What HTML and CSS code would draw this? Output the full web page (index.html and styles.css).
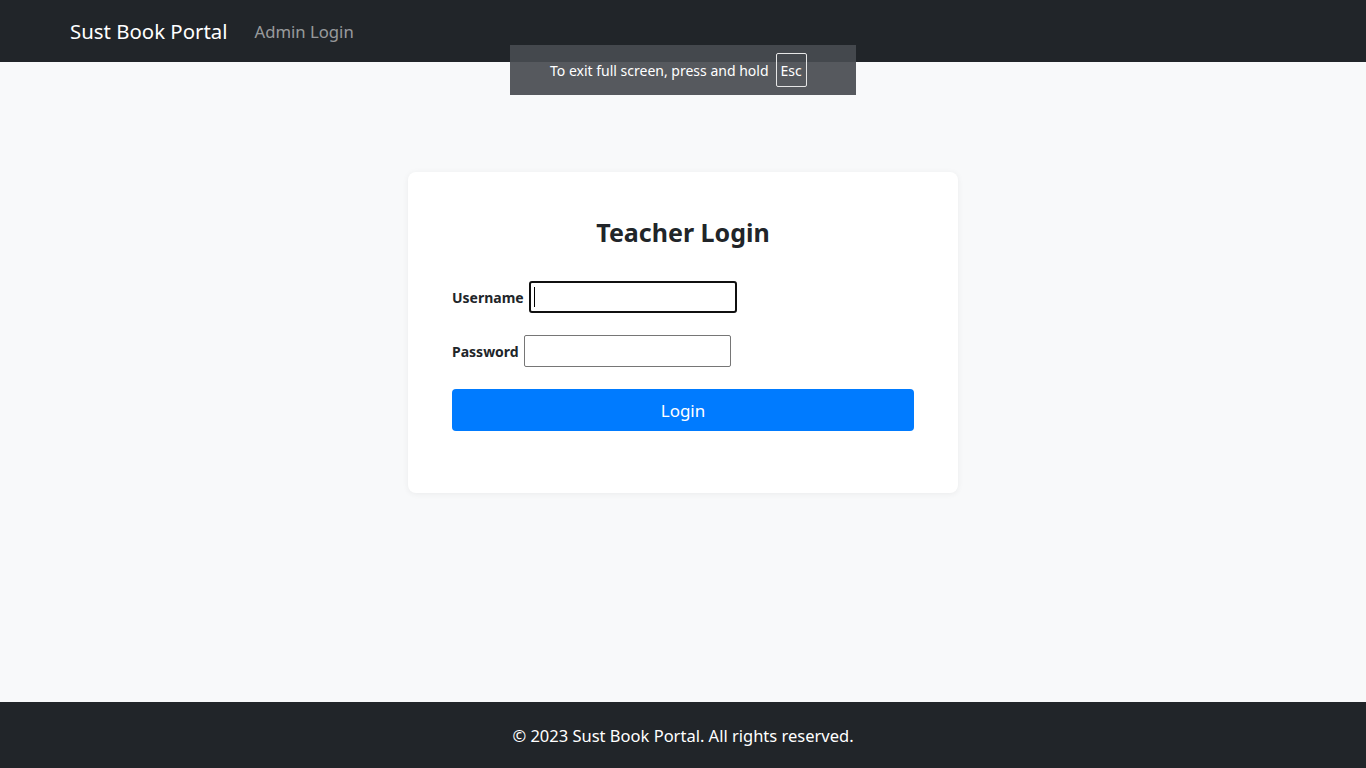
FILE: index.html
```html
<!DOCTYPE html>
<html lang="en">
<head>
<meta charset="utf-8">
<title>Teacher Login - Sust Book Portal</title>
<link rel="stylesheet" href="styles.css">
</head>
<body>
<div class="page">
  <nav class="navbar">
    <a class="brand" href="#">Sust Book Portal</a>
    <a class="nav-link" href="#">Admin Login</a>
  </nav>
  <main class="main">
    <div class="card">
      <h3 class="title">Teacher Login</h3>
      <form class="form">
        <div class="row row-user">
          <label class="label" for="username">Username</label>
          <div class="input input-focus" id="username"><span class="caret"></span></div>
        </div>
        <div class="row row-pass">
          <label class="label" for="password">Password</label>
          <input class="input" id="password" type="password">
        </div>
        <button class="btn" type="button">Login</button>
      </form>
    </div>
  </main>
  <footer class="footer">© 2023 Sust Book Portal. All rights reserved.</footer>
  <div class="fs-toast">To exit full screen, press and hold <span class="key">Esc</span></div>
</div>
</body>
</html>
```
FILE: styles.css
```css
* { box-sizing: border-box; }
html, body { margin: 0; padding: 0; }
body {
  font-family: "Noto Sans", "Open Sans", "Liberation Sans", sans-serif;
  color: #212529;
  background: #f8f9fa;
}
.page {
  height: 768px;
  display: flex;
  flex-direction: column;
  position: relative;
}
.navbar {
  height: 62px;
  background: #212529;
  display: flex;
  align-items: center;
  padding-left: 70px;
  gap: 27px;
}
.brand {
  color: #fff;
  font-size: 20.4px;
  text-decoration: none;
}
.nav-link {
  color: rgba(255,255,255,0.55);
  font-size: 16.7px;
  text-decoration: none;
}
.main {
  flex: 1;
  display: flex;
  justify-content: center;
  align-items: flex-start;
  padding-top: 110px;
}
.card {
  width: 550px;
  height: 321px;
  background: #fff;
  border-radius: 8px;
  box-shadow: 0 1px 6px rgba(0,0,0,0.06);
  padding: 42px 44px 44px;
}
.title {
  margin: 0 0 31px;
  text-align: center;
  font-size: 25px;
  font-weight: 700;
  line-height: 36px;
}
.form { display: flex; flex-direction: column; }
.row {
  display: flex;
  align-items: center;
  gap: 5px;
  height: 32px;
}
.row-user { margin-bottom: 22px; }
.row-pass { margin-bottom: 22px; }
.label {
  font-size: 14px;
  font-weight: 700;
}
.input {
  width: 207px;
  height: 32px;
  border: 1px solid #767676;
  border-radius: 2px;
  background: #fff;
  font-size: 14px;
  padding: 2px 6px;
  outline: none;
}
.input-focus {
  width: 208px;
  border: 2px solid #101010;
  border-radius: 3px;
  display: flex;
  align-items: center;
  padding: 0 3px;
}
.caret {
  width: 1px;
  height: 20px;
  background: #000;
}
.btn {
  width: 462px;
  height: 42px;
  background: #007bff;
  color: #fff;
  border: none;
  border-radius: 4px;
  font-family: inherit;
  font-size: 17px;
  cursor: pointer;
}
.footer {
  height: 66px;
  background: #212529;
  color: #fff;
  display: flex;
  align-items: center;
  justify-content: center;
  font-size: 16.5px;
}
.fs-toast {
  position: absolute;
  left: 510px;
  top: 45px;
  width: 346px;
  height: 50px;
  background: rgba(72,75,80,0.92);
  color: #fff;
  font-size: 14px;
  display: flex;
  align-items: center;
  justify-content: flex-start;
  padding-left: 40px;
  gap: 7px;
}
.key {
  border: 1px solid #e6e6e6;
  border-radius: 2px;
  padding: 0 4px;
  height: 34px;
  display: inline-flex;
  align-items: center;
}
```
